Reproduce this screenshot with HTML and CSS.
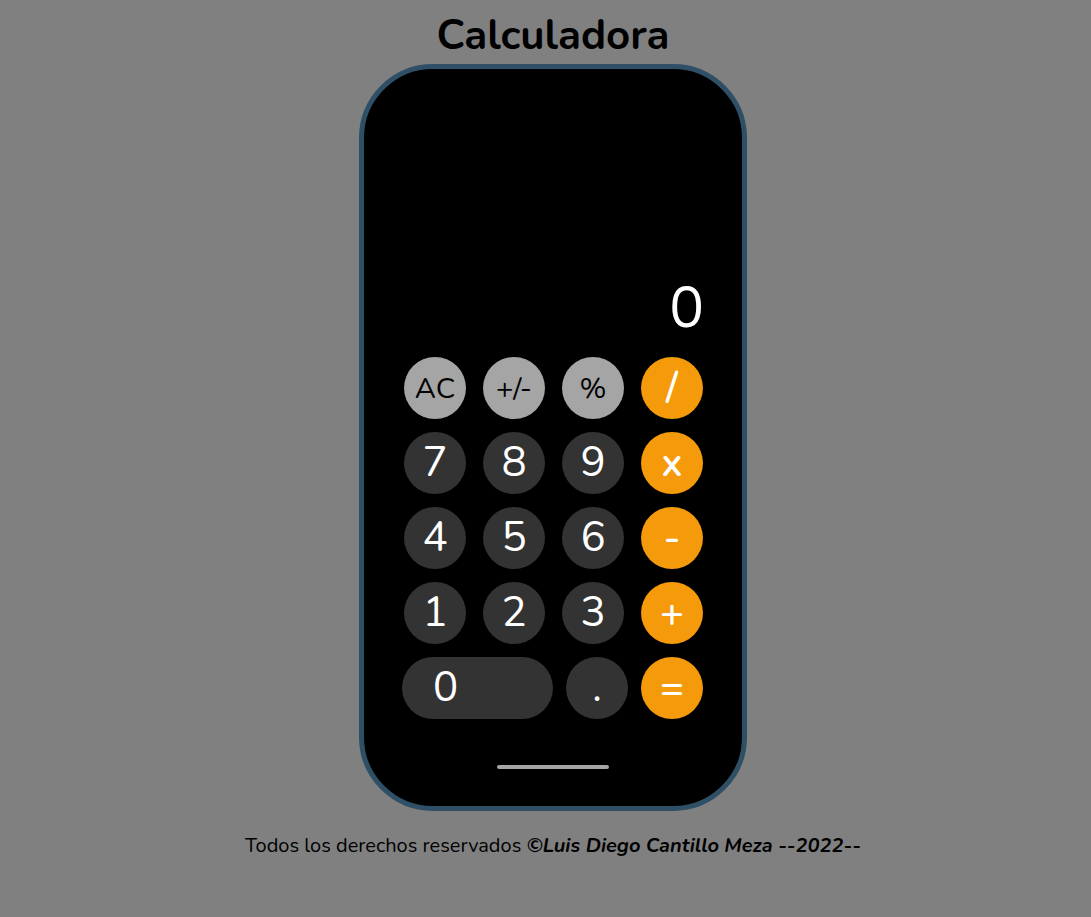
FILE: index.html
```html
<!DOCTYPE html>
<html lang="es">
<head>
<meta charset="utf-8">
<title>Calculadora</title>
<link rel="stylesheet" href="styles.css">
</head>
<body>
  <h1 class="title">Calculadora</h1>
  <main class="phone">
    <div class="display"><span class="value">0</span></div>
    <div class="keys">
      <button class="key key-light">AC</button>
      <button class="key key-light">+/-</button>
      <button class="key key-light">%</button>
      <button class="key key-op">/</button>
      <button class="key key-dark">7</button>
      <button class="key key-dark">8</button>
      <button class="key key-dark">9</button>
      <button class="key key-op">x</button>
      <button class="key key-dark">4</button>
      <button class="key key-dark">5</button>
      <button class="key key-dark">6</button>
      <button class="key key-op">-</button>
      <button class="key key-dark">1</button>
      <button class="key key-dark">2</button>
      <button class="key key-dark">3</button>
      <button class="key key-op">+</button>
    </div>
    <div class="last-row">
      <button class="key key-dark key-zero">0</button>
      <button class="key key-dark">.</button>
      <button class="key key-op">=</button>
    </div>
    <div class="home-bar"></div>
  </main>
  <footer class="footer">Todos los derechos reservados <strong class="author">©Luis Diego Cantillo Meza --2022--</strong></footer>
</body>
</html>
```
FILE: styles.css
```css
* { box-sizing: border-box; }

body {
  margin: 0;
  padding-left: 15px;
  background: #808080;
  font-family: "Nunito", "Lato", "Open Sans", sans-serif;
  color: #000;
}

.title {
  margin: 10px 0 0;
  text-align: center;
  font-size: 42px;
  font-weight: 700;
  line-height: 52px;
}

.phone {
  width: 388px;
  height: 747px;
  margin: 2px auto 0;
  border: 5px solid #2e4f66;
  border-radius: 74px;
  background: #000;
  display: flex;
  flex-direction: column;
}

.display {
  height: 288px;
  display: flex;
  justify-content: flex-end;
  align-items: flex-end;
  padding: 0 38px 20px 0;
}

.value {
  color: #fff;
  font-size: 58px;
  line-height: 1;
}

.keys {
  display: grid;
  grid-template-columns: repeat(4, 62px);
  grid-auto-rows: 62px;
  column-gap: 17px;
  row-gap: 13px;
  padding-left: 40px;
}

.last-row {
  display: flex;
  gap: 13px;
  margin-top: 13px;
  padding-left: 38px;
  height: 62px;
}

.key {
  border: none;
  border-radius: 31px;
  width: 62px;
  height: 62px;
  padding: 0;
  font-family: inherit;
  font-size: 42px;
  line-height: 1;
  display: flex;
  align-items: center;
  justify-content: center;
}

.key-light {
  background: #a5a5a5;
  color: #000;
  font-size: 29px;
}

.key-dark {
  background: #333333;
  color: #fff;
}

.key-op {
  background: #f59b0b;
  color: #fff;
  font-size: 40px;
  font-weight: 600;
}

.key-zero {
  width: 151px;
  justify-content: flex-start;
  padding-left: 31px;
}

.home-bar {
  width: 112px;
  height: 4px;
  border-radius: 2px;
  background: #a5a5a5;
  margin: 46px auto 0;
}

.footer {
  margin-top: 21px;
  text-align: center;
  font-size: 20px;
}

.author {
  font-style: italic;
  font-weight: 700;
}
```
